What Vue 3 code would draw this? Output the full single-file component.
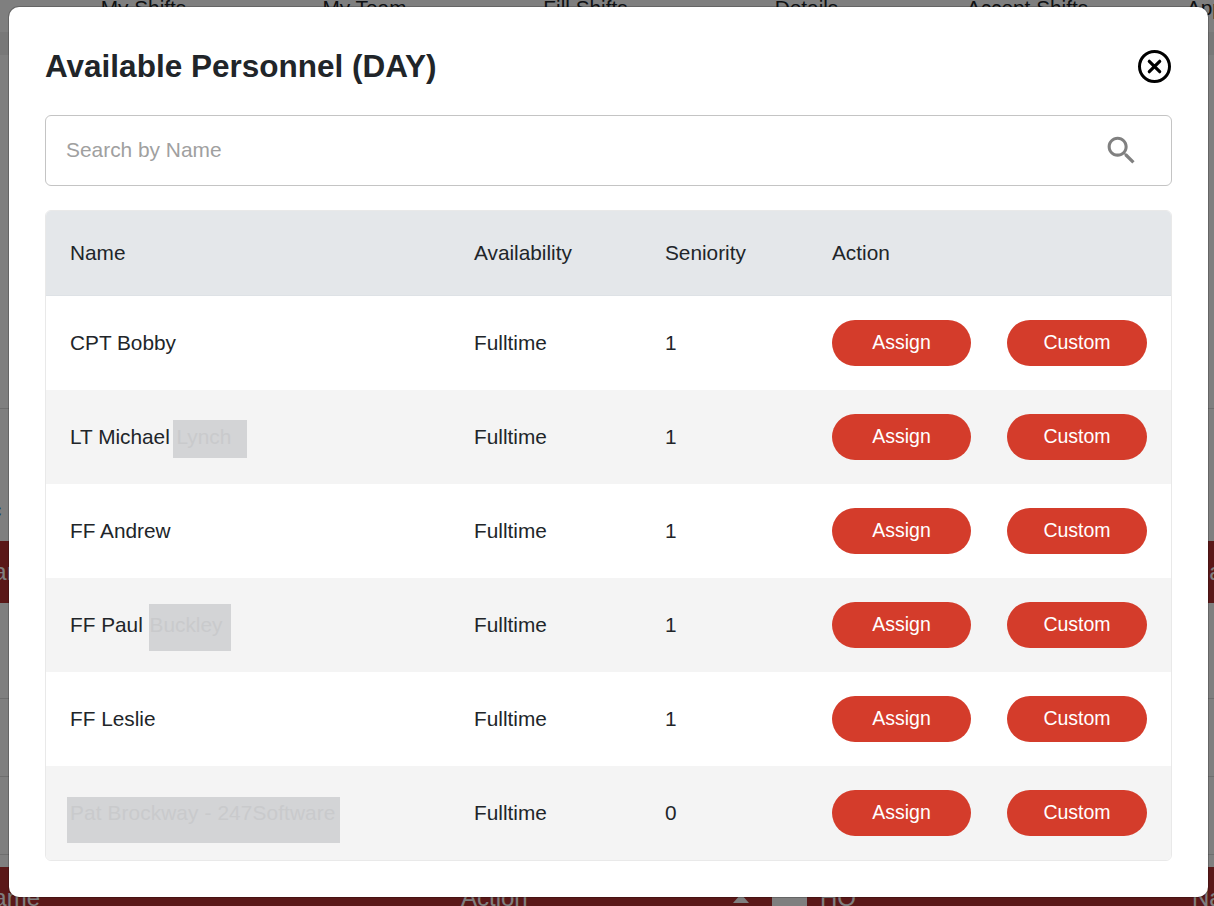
<script setup>
const tabs = ['My Shifts', 'My Team', 'Fill Shifts', 'Details', 'Accept Shifts', 'Approve Shifts']
const people = [
  { first: 'CPT Bobby', availability: 'Fulltime', seniority: 1 },
  { first: 'LT Michael', hidden: 'Lynch', mask: 'mask-lynch', availability: 'Fulltime', seniority: 1 },
  { first: 'FF Andrew', availability: 'Fulltime', seniority: 1 },
  { first: 'FF Paul', hidden: 'Buckley', mask: 'mask-buckley', availability: 'Fulltime', seniority: 1 },
  { first: 'FF Leslie', availability: 'Fulltime', seniority: 1 },
  { first: '', hidden: 'Pat Brockway - 247Software', mask: 'mask-pat', availability: 'Fulltime', seniority: 0 }
]
</script>

<template>
  <div class="page">
    <nav class="tabs">
      <span v-for="t in tabs" :key="t" class="tab">{{ t }}</span>
    </nav>
    <div class="band"></div>
    <div class="blank first"></div>
    <div class="blank link-row"><span class="link">c</span></div>
    <div class="red-row">
      <span class="c-name">Name</span>
      <span class="c-action">Action<i class="sort"></i></span>
      <span class="c-box"></span>
      <span class="c-hq">HQ</span>
      <span class="c-last">Name</span>
    </div>
    <div class="blank r96"></div>
    <div class="blank r78"></div>
    <div class="blank r78"></div>
    <div class="blank r12"></div>
    <div class="red-row">
      <span class="c-name">Name</span>
      <span class="c-action">Action<i class="sort"></i></span>
      <span class="c-box"></span>
      <span class="c-hq">HQ</span>
      <span class="c-last">Name</span>
    </div>

    <div class="overlay">
      <section class="modal">
        <header class="head">
          <h2 class="title">Available Personnel (DAY)</h2>
          <button class="close" type="button" aria-label="Close">
            <svg width="33" height="33" viewBox="0 0 33 33" fill="none" stroke="#000">
              <circle cx="16.5" cy="16.5" r="15" stroke-width="3" />
              <path d="M11.3 11.3l10.4 10.4M21.7 11.3L11.3 21.7" stroke-width="3.2" stroke-linecap="round" />
            </svg>
          </button>
        </header>

        <div class="search">
          <input class="search-input" type="text" placeholder="Search by Name" />
          <svg class="search-icon" width="37" height="37" viewBox="0 0 24 24" fill="#808080">
            <path d="M15.5 14h-.79l-.28-.27C15.41 12.59 16 11.11 16 9.5 16 5.91 13.09 3 9.5 3S3 5.91 3 9.5 5.91 16 9.5 16c1.61 0 3.09-.59 4.23-1.57l.27.28v.79l5 4.99L20.49 19l-4.99-5zm-6 0C7.01 14 5 11.99 5 9.5S7.01 5 9.5 5 14 7.01 14 9.5 11.99 14 9.5 14z" />
          </svg>
        </div>

        <div class="table-wrap">
          <table class="table">
            <colgroup>
              <col class="col-name" />
              <col class="col-avail" />
              <col class="col-sen" />
              <col />
            </colgroup>
            <thead>
              <tr>
                <th>Name</th>
                <th>Availability</th>
                <th>Seniority</th>
                <th>Action</th>
              </tr>
            </thead>
            <tbody>
              <tr v-for="(p, i) in people" :key="i">
                <td>{{ p.first }} <span v-if="p.hidden" class="mask" :class="p.mask">{{ p.hidden }}</span></td>
                <td>{{ p.availability }}</td>
                <td>{{ p.seniority }}</td>
                <td>
                  <div class="actions">
                    <button class="btn btn-assign" type="button">Assign</button>
                    <button class="btn btn-custom" type="button">Custom</button>
                  </div>
                </td>
              </tr>
            </tbody>
          </table>
        </div>
      </section>
    </div>
  </div>
</template>

<style scoped>
.page {
  position: relative;
  height: 906px;
  overflow: hidden;
  background: #fff;
  font-family: "Liberation Sans", Arial, sans-serif;
  color: #212529;
}
.tabs {
  display: flex;
  height: 48px;
  margin-top: -16px;
  padding-left: 33px;
  box-sizing: border-box;
  align-items: center;
  font-size: 20.8px;
  white-space: nowrap;
}
.tab {
  flex: 0 0 221px;
  text-align: center;
}
.tab:last-child {
  padding-left: 6px;
}
.band {
  height: 23px;
  background: #f0f0f0;
}
.blank {
  box-sizing: border-box;
  border-bottom: 1px solid #ddd;
}
.first { height: 354px; }
.link-row {
  height: 132px;
  border-bottom: 0;
  padding-top: 89px;
  font-size: 20.8px;
  line-height: 24px;
}
.link {
  display: block;
  margin-left: -9px;
  color: #2a7fd0;
}
.r96 { height: 96px; }
.r78 { height: 78px; }
.r12 { height: 12px; border-bottom: 0; }
.red-row {
  display: grid;
  grid-template-columns: 461px 311px 35px 385px 32px;
  height: 62px;
  flex: none;
  align-items: center;
  background: #b43030;
  color: #fff;
  font-size: 24px;
  white-space: nowrap;
}
.c-name { margin-left: -24px; }
.c-action {
  display: flex;
  align-items: center;
}
.sort {
  width: 0;
  height: 0;
  margin-left: auto;
  margin-right: 23px;
  border-left: 8px solid transparent;
  border-right: 8px solid transparent;
  border-bottom: 9px solid #fff;
}
.c-box {
  align-self: stretch;
  background: #fff;
}
.c-hq { margin-left: 13px; }

.overlay {
  position: absolute;
  inset: 0;
  display: flex;
  box-sizing: border-box;
  padding: 7px 6px 9px 9px;
  background: rgba(0, 0, 0, 0.5);
}
.modal {
  flex: 1;
  box-sizing: border-box;
  padding: 36px;
  background: #fff;
  border-radius: 10px;
  box-shadow: 0 0 0 1px rgba(0, 0, 0, 0.2);
}
.head {
  display: flex;
  align-items: center;
  justify-content: space-between;
  height: 47px;
  margin-bottom: 25px;
}
.title {
  margin: 0;
  font-size: 31.5px;
  font-weight: 700;
  line-height: 47px;
  color: #212529;
}
.close {
  display: flex;
  margin: 0 1px 0 0;
  padding: 0;
  border: 0;
  background: none;
}
.search {
  display: flex;
  align-items: center;
  box-sizing: border-box;
  height: 71px;
  margin-bottom: 24px;
  padding: 0 31px 0 20px;
  border: 1px solid #c4c4c4;
  border-radius: 6px;
}
.search-input {
  flex: 1;
  min-width: 0;
  padding: 0 0 2px;
  border: 0;
  outline: 0;
  background: none;
  font-family: inherit;
  font-size: 20.9px;
  color: #212529;
}
.search-input::placeholder {
  color: #a0a0a0;
  opacity: 1;
}
.search-icon {
  flex: none;
}
.table-wrap {
  box-sizing: border-box;
  height: 651px;
  border: 1px solid #e9e9e9;
  border-radius: 6px;
  overflow: hidden;
}
.table {
  width: 100%;
  border-collapse: separate;
  border-spacing: 0;
  table-layout: fixed;
  font-size: 20.8px;
  color: #212529;
}
.col-name { width: 404px; }
.col-avail { width: 191px; }
.col-sen { width: 167px; }
th, td {
  padding: 0 24px;
  text-align: left;
  font-weight: 400;
  vertical-align: middle;
  white-space: nowrap;
}
th {
  height: 85px;
  box-sizing: border-box;
  background: #e4e7ea;
  border-bottom: 1px solid #dee2e6;
}
td {
  height: 94px;
  box-sizing: border-box;
}
tbody tr:nth-child(even) td {
  background: #f4f4f4;
}
.mask {
  background: #d3d4d6;
  color: #c9cacc;
}
.mask-lynch {
  margin-left: -3px;
  padding: 5px 16px 10px 4px;
}
.mask-buckley {
  padding: 9px 9px 15px 1px;
}
.mask-pat {
  margin-left: -3px;
  padding: 4px 4px 19px 3px;
  letter-spacing: 0.12px;
}
.actions {
  display: flex;
  gap: 36px;
}
.btn {
  height: 46px;
  padding: 0 0 2px;
  border: 0;
  border-radius: 23px;
  background: #d43c2b;
  color: #fff;
  font-family: inherit;
  font-size: 19.5px;
}
.btn-assign { width: 139px; }
.btn-custom { width: 140px; }
</style>

<style>
html, body { margin: 0; overflow: hidden; }
</style>
